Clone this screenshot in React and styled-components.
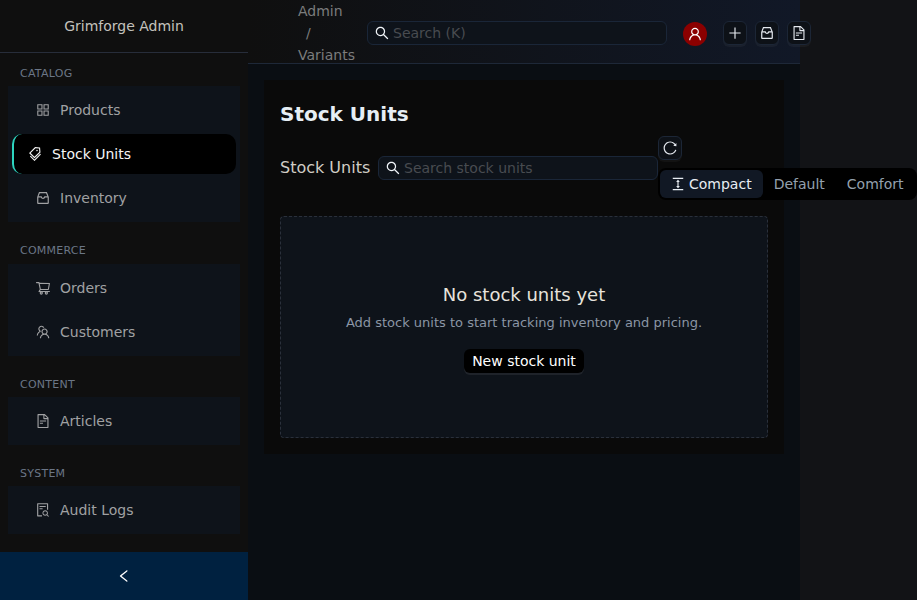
import React from "react";
import styled, { createGlobalStyle } from "styled-components";
import {
  AiOutlineAppstore,
  AiOutlineTags,
  AiOutlineInbox,
  AiOutlineShoppingCart,
  AiOutlineTeam,
  AiOutlineFileText,
  AiOutlineFileSearch,
  AiOutlineLeft,
  AiOutlineSearch,
  AiOutlineUser,
  AiOutlinePlus,
  AiOutlineReload,
  AiOutlineColumnHeight,
} from "react-icons/ai";

const Global = createGlobalStyle`
  * { box-sizing: border-box; }
  body {
    margin: 0;
    background: #121316;
    font: 14px/22px "DejaVu Sans", sans-serif;
    overflow: hidden;
  }
  svg { display: block; flex: none; width: 16px; height: 16px; margin: -1px; }
`;

const Shell = styled.div`
  display: flex;
  width: 800px;
  height: 600px;
`;

const Sidebar = styled.aside`
  display: flex;
  flex-direction: column;
  width: 248px;
  flex: none;
  background: #0f0f0f;
`;

const Brand = styled.div`
  height: 53px;
  flex: none;
  border-bottom: 1px solid #272d3a;
  color: #c4c2bd;
  line-height: 52px;
  text-align: center;
`;

const Nav = styled.nav`
  flex: 1;
  padding: 0 8px;
`;

const GroupTitle = styled.div`
  height: 33px;
  padding: ${(p) => p.$top}px 12px 0;
  color: #6b7686;
  font-size: 11px;
  letter-spacing: 0.25px;
`;

const Group = styled.div`
  display: flex;
  flex-direction: column;
  gap: 4px;
  padding: 4px;
  margin-bottom: ${(p) => p.$gap}px;
  background: #0e131a;
`;

const Item = styled.div`
  display: flex;
  align-items: center;
  gap: 10px;
  height: 40px;
  padding-left: ${(p) => (p.$active ? "14px" : "24px")};
  border-left: ${(p) => (p.$active ? "2px solid #2dd4bf" : "0")};
  border-radius: 10px;
  background: ${(p) => (p.$active ? "#000" : "transparent")};
  color: ${(p) => (p.$active ? "#f5f5f5" : "#a0a1a3")};
`;

const Collapse = styled.button`
  display: flex;
  align-items: center;
  justify-content: center;
  height: 48px;
  border: 0;
  background: #002140;
  color: #fff;
`;

const Main = styled.main`
  width: 552px;
  background: #0a0e13;
`;

const Header = styled.header`
  display: flex;
  align-items: center;
  height: 64px;
  padding: 2px 0 0 50px;
  border-bottom: 1px solid #1e2838;
  background: linear-gradient(90deg, #0f0f0f, #111827);
`;

const Breadcrumb = styled.div`
  width: 57px;
  margin-right: 12px;
  flex: none;
  color: #7b7c7d;
`;

const Slash = styled.div`
  padding-left: 8px;
`;

const SearchBox = styled.label`
  display: flex;
  align-items: center;
  gap: 4px;
  width: ${(p) => p.$width}px;
  height: 24px;
  flex: none;
  padding: 0 7px;
  border: 1px solid #1a2638;
  border-radius: 6px;
  background: #0e131a;
  color: #f1f5f9;
`;

const SearchInput = styled.input`
  flex: 1;
  min-width: 0;
  padding: 0;
  border: 0;
  outline: 0;
  background: transparent;
  font: inherit;
  &::placeholder { color: #484b50; opacity: 1; }
`;

const Avatar = styled.div`
  display: flex;
  align-items: center;
  justify-content: center;
  width: 24px;
  height: 24px;
  flex: none;
  margin: 2px 16px 0;
  border-radius: 50%;
  background: #8b0000;
  color: #fff;
`;

const IconButton = styled.button`
  display: flex;
  align-items: center;
  justify-content: center;
  width: 24px;
  height: 24px;
  flex: none;
  padding: 0;
  border: 1px solid #1c2636;
  border-radius: 6px;
  background: #0d1117;
  color: #e5e9ef;
  box-shadow: 0 2px 0 rgba(255, 255, 255, 0.04);
`;

const Actions = styled.div`
  display: flex;
  gap: 8px;
`;

const Card = styled.section`
  height: 374px;
  margin: 16px;
  padding: 16px;
  background: #0a0a0a;
`;

const Title = styled.h1`
  margin: 4px 0 0;
  color: #e6eef5;
  font-size: 20px;
  line-height: 28px;
  font-weight: 700;
`;

const Toolbar = styled.div`
  display: flex;
  align-items: center;
  height: 64px;
  margin-top: 8px;
`;

const ToolbarLabel = styled.div`
  width: 98px;
  flex: none;
  color: #d1cdc5;
  font-size: 16px;
  white-space: nowrap;
`;

const Controls = styled.div`
  display: flex;
  flex-direction: column;
  gap: 8px;
  flex: none;
`;

const Segmented = styled.div`
  display: flex;
  width: 259px;
  height: 32px;
  padding: 2px;
  border-radius: 8px;
  background: #000;
`;

const Segment = styled.div`
  display: flex;
  align-items: center;
  gap: 4px;
  height: 28px;
  padding: 0 11px;
  border-radius: 6px;
  background: ${(p) => (p.$active ? "#111824" : "transparent")};
  color: ${(p) => (p.$active ? "#e8edf3" : "#94a0ae")};
`;

const Empty = styled.div`
  display: flex;
  flex-direction: column;
  align-items: center;
  height: 222px;
  margin-top: 16px;
  padding-top: 63px;
  border: 1px dashed #2a303b;
  border-radius: 4px;
  background: #0e131a;
`;

const EmptyTitle = styled.div`
  color: #e7e3dc;
  font-size: 18px;
  line-height: 30px;
`;

const EmptyText = styled.div`
  margin-top: 2px;
  color: #8b96a5;
  font-size: 13px;
`;

const PrimaryButton = styled.button`
  height: 24px;
  margin-top: 15px;
  padding: 0 8px;
  border: 0;
  border-radius: 6px;
  background: #000;
  color: #fff;
  font: inherit;
  box-shadow: 0 2px 0 rgba(255, 255, 255, 0.07);
`;

const groups = [
  {
    title: "CATALOG",
    top: 10,
    gap: 9,
    items: [
      ["Products", AiOutlineAppstore],
      ["Stock Units", AiOutlineTags],
      ["Inventory", AiOutlineInbox],
    ],
  },
  {
    title: "COMMERCE",
    top: 9,
    gap: 8,
    items: [
      ["Orders", AiOutlineShoppingCart],
      ["Customers", AiOutlineTeam],
    ],
  },
  { title: "CONTENT", top: 10, gap: 8, items: [["Articles", AiOutlineFileText]] },
  { title: "SYSTEM", top: 10, gap: 8, items: [["Audit Logs", AiOutlineFileSearch]] },
];

export default function App() {
  return (
    <>
      <Global />
      <Shell>
        <Sidebar>
          <Brand>Grimforge Admin</Brand>
          <Nav>
            {groups.map((group) => (
              <React.Fragment key={group.title}>
                <GroupTitle $top={group.top}>{group.title}</GroupTitle>
                <Group $gap={group.gap}>
                  {group.items.map(([name, Icon]) => (
                    <Item key={name} $active={name === "Stock Units"}>
                      <Icon />
                      {name}
                    </Item>
                  ))}
                </Group>
              </React.Fragment>
            ))}
          </Nav>
          <Collapse aria-label="Collapse">
            <AiOutlineLeft />
          </Collapse>
        </Sidebar>
        <Main>
          <Header>
            <Breadcrumb>
              <div>Admin</div>
              <Slash>/</Slash>
              <div>Variants</div>
            </Breadcrumb>
            <SearchBox $width={300}>
              <AiOutlineSearch />
              <SearchInput placeholder="Search (K)" />
            </SearchBox>
            <Avatar>
              <AiOutlineUser />
            </Avatar>
            <Actions>
              <IconButton aria-label="Add"><AiOutlinePlus /></IconButton>
              <IconButton aria-label="Inbox"><AiOutlineInbox /></IconButton>
              <IconButton aria-label="Document"><AiOutlineFileText /></IconButton>
            </Actions>
          </Header>
          <Card>
            <Title>Stock Units</Title>
            <Toolbar>
              <ToolbarLabel>Stock Units</ToolbarLabel>
              <SearchBox $width={280}>
                <AiOutlineSearch />
                <SearchInput placeholder="Search stock units" />
              </SearchBox>
              <Controls>
                <IconButton aria-label="Reload"><AiOutlineReload /></IconButton>
                <Segmented>
                  <Segment $active>
                    <AiOutlineColumnHeight />
                    Compact
                  </Segment>
                  <Segment>Default</Segment>
                  <Segment>Comfort</Segment>
                </Segmented>
              </Controls>
            </Toolbar>
            <Empty>
              <EmptyTitle>No stock units yet</EmptyTitle>
              <EmptyText>Add stock units to start tracking inventory and pricing.</EmptyText>
              <PrimaryButton>New stock unit</PrimaryButton>
            </Empty>
          </Card>
        </Main>
      </Shell>
    </>
  );
}
